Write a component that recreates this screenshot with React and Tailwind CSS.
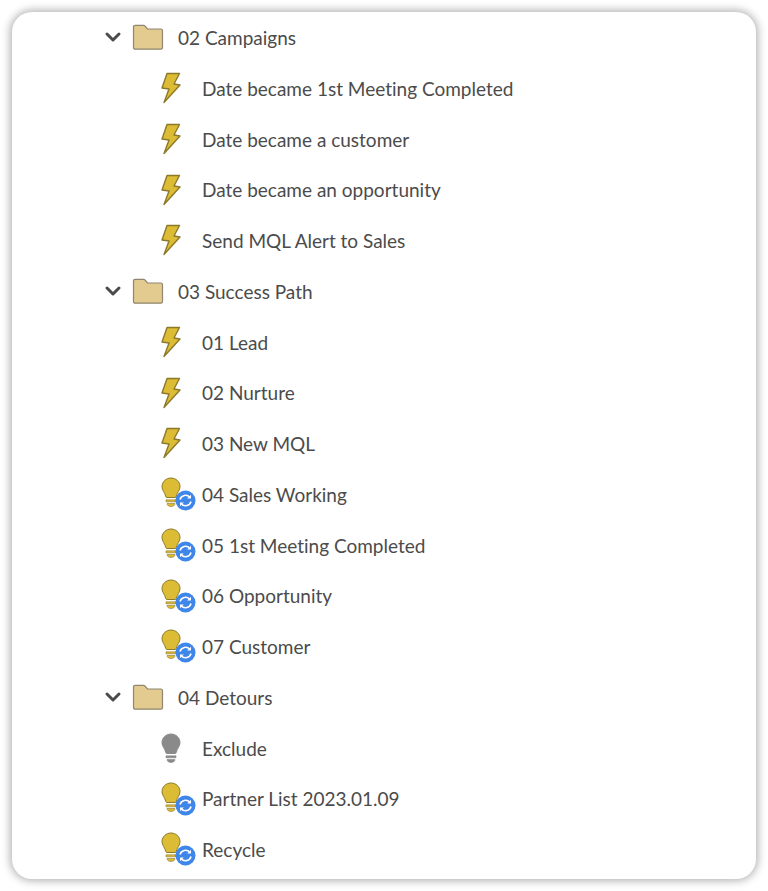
import React from 'react';
import { ChevronDown } from 'lucide-react';

const rows = [
  { type: 'folder', label: '02 Campaigns' },
  { type: 'bolt', label: 'Date became 1st Meeting Completed' },
  { type: 'bolt', label: 'Date became a customer' },
  { type: 'bolt', label: 'Date became an opportunity' },
  { type: 'bolt', label: 'Send MQL Alert to Sales' },
  { type: 'folder', label: '03 Success Path' },
  { type: 'bolt', label: '01 Lead' },
  { type: 'bolt', label: '02 Nurture' },
  { type: 'bolt', label: '03 New MQL' },
  { type: 'bulbSync', label: '04 Sales Working' },
  { type: 'bulbSync', label: '05 1st Meeting Completed' },
  { type: 'bulbSync', label: '06 Opportunity' },
  { type: 'bulbSync', label: '07 Customer' },
  { type: 'folder', label: '04 Detours' },
  { type: 'bulbGray', label: 'Exclude' },
  { type: 'bulbSync', label: 'Partner List 2023.01.09' },
  { type: 'bulbSync', label: 'Recycle' },
];

const FolderIcon = () => (
  <svg width="32" height="26" viewBox="0 0 32 26" className="shrink-0">
    <path
      d="M1.5 23.5V3c0-1 .7-1.700 1.700-1.700h8.300c.7 0 1.200.3 1.600.8l2.400 2.900h13.300c1 0 1.700.7 1.700 1.700v16.800c0 1-.7 1.700-1.700 1.700H3.200c-1 0-1.700-.7-1.700-1.700z"
      fill="#e3ca8f"
      stroke="#8f8570"
      strokeWidth="1.2"
    />
  </svg>
);

const BoltIcon = () => (
  <svg width="21" height="32" viewBox="0 0 21 32">
    <path
      d="M6 1.500h12.500L13 12l6 1L3 30.500 8 17l-7-1z"
      fill="#dcbb35"
      stroke="#8c7a2a"
      strokeWidth="1.4"
      strokeLinejoin="round"
    />
  </svg>
);

const BulbShape = ({ fill, stroke }) => (
  <>
    <path
      d="M10 1c-5 0-9 3.800-9 8.600 0 3.800 2.800 5.800 3.600 9.400.2.900.6 1.500 1.400 1.500h8c.8 0 1.200-.6 1.400-1.500.8-3.600 3.600-5.600 3.600-9.400C19 4.800 15 1 10 1z"
      fill={fill}
      stroke={stroke}
      strokeWidth="1"
    />
    <path d="M5 22.800h10v2H5z" fill={fill} stroke={stroke} strokeWidth="0.6" />
    <path d="M6 26.500h8c0 1.900-1.800 3-4 3s-4-1.100-4-3z" fill={fill} stroke={stroke} strokeWidth="0.6" />
  </>
);

const BulbGray = () => (
  <svg width="20" height="30" viewBox="0 0 20 30">
    <BulbShape fill="#8a8a8a" stroke="#8a8a8a" />
  </svg>
);

const BulbSync = () => (
  <div className="relative w-[36px] h-[36px]">
    <svg width="20" height="30" viewBox="0 0 20 30" className="absolute left-0 top-[1px]">
      <BulbShape fill="#dcbb35" stroke="#8c7a2a" />
    </svg>
    <svg width="21" height="21" viewBox="0 0 21 21" className="absolute left-[14px] top-[14px]">
      <circle cx="10.500" cy="10.500" r="10" fill="#3f86ea" />
      <path d="M5 9.500a5.700 5.700 0 0 1 9.800-2.300" fill="none" stroke="#fff" strokeWidth="1.6" />
      <path d="M16 4.800v3.800h-3.800z" fill="#fff" />
      <path d="M16 11.500a5.700 5.700 0 0 1-9.800 2.300" fill="none" stroke="#fff" strokeWidth="1.6" />
      <path d="M5 16.200v-3.800h3.800z" fill="#fff" />
    </svg>
  </div>
);

const Row = ({ type, label }) => {
  if (type === 'folder') {
    return (
      <div className="h-[50.75px] flex items-center pl-[89px]">
        <ChevronDown className="w-[24px] h-[24px] text-[#4b4b4b] shrink-0" strokeWidth={3} />
        <div className="ml-[7px]"><FolderIcon /></div>
        <span className="ml-[14px] pt-[2px] text-[#4b4b4b]">{label}</span>
      </div>
    );
  }
  return (
    <div className="h-[50.75px] flex items-center pl-[149px]">
      <div className="w-[41px] h-[36px] shrink-0 flex items-center">
        {type === 'bolt' && <BoltIcon />}
        {type === 'bulbGray' && <BulbGray />}
        {type === 'bulbSync' && <BulbSync />}
      </div>
      <span className="pt-[2px] text-[#4b4b4b]">{label}</span>
    </div>
  );
};

export default function App() {
  return (
    <div className="w-[768px] h-[891px] bg-white pt-[12px] pl-[12px]">
      <div
        className="w-[744px] h-[867px] bg-white rounded-[20px] shadow-[0_0_8px_2px_rgba(0,0,0,0.3)] text-[19px] [font-variant-ligatures:none] overflow-hidden"
        style={{ fontFamily: 'Lato, sans-serif' }}
      >
        {rows.map((r) => (
          <Row key={r.label} type={r.type} label={r.label} />
        ))}
      </div>
    </div>
  );
}
